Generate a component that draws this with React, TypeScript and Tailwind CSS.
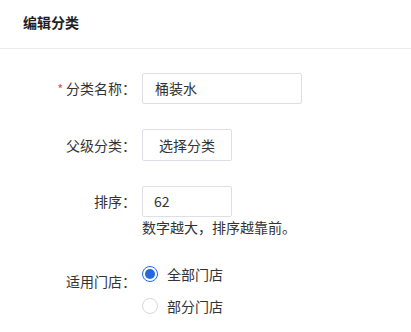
import { useState } from 'react'

const FONT = { fontFamily: '"Noto Sans CJK SC", "Noto Sans", sans-serif' }

function Label({ children, required }: { children: React.ReactNode; required?: boolean }) {
  return (
    <div className="w-[142px] shrink-0 h-[31px] flex items-center justify-end pr-[6px] text-[#333]">
      {required && <span className="text-[#e54545] mr-[3px] text-[12px]">*</span>}
      {children}
    </div>
  )
}

export default function App() {
  const [store, setStore] = useState<'all' | 'part'>('all')

  return (
    <div className="w-[411px] h-[332px] bg-white text-[14px] overflow-hidden" style={FONT}>
      {/* 标题 */}
      <div className="h-[49px] flex items-center px-[23px] pb-[4px] border-b border-[#ebebeb]">
        <h1 className="text-[14px] font-bold text-[#1f1f1f]">编辑分类</h1>
      </div>

      <div className="pt-[24px] flex flex-col gap-[25px]">
        <div className="flex items-center">
          <Label required>分类名称：</Label>
          <div className="w-[160px] h-[31px] border border-[#dcdfe6] rounded-[2px] flex items-center px-[12px] text-[#333]">
            桶装水
          </div>
        </div>

        <div className="flex items-center">
          <Label>父级分类：</Label>
          <button className="w-[90px] h-[32px] border border-[#dcdfe6] rounded-[2px] text-[#333] bg-white">
            选择分类
          </button>
        </div>

        <div className="flex items-start">
          <Label>排序：</Label>
          <div className="flex flex-col">
            <div className="w-[90px] h-[31px] border border-[#dcdfe6] rounded-[2px] flex items-center px-[11px] text-[#333]">
              62
            </div>
            <div className="mt-[1px] leading-[18px] text-[#333]">数字越大，排序越靠前。</div>
          </div>
        </div>

        <div className="flex items-start">
          <div className="pt-[5px]">
            <Label>适用门店：</Label>
          </div>
          <div className="flex flex-col -mt-[3px]">
            {[
              { key: 'all' as const, text: '全部门店' },
              { key: 'part' as const, text: '部分门店' },
            ].map((r) => (
              <label key={r.key} className="h-[32px] flex items-center cursor-pointer" onClick={() => setStore(r.key)}>
                <span
                  className={
                    store === r.key
                      ? 'w-[16px] h-[16px] rounded-full border border-[#2468e0] flex items-center justify-center'
                      : 'w-[16px] h-[16px] rounded-full border border-[#d9d9d9] flex items-center justify-center'
                  }
                >
                  {store === r.key && <span className="w-[10px] h-[10px] rounded-full bg-[#2468e0]" />}
                </span>
                <span className="ml-[9px] text-[#333]">{r.text}</span>
              </label>
            ))}
          </div>
        </div>
      </div>
    </div>
  )
}
